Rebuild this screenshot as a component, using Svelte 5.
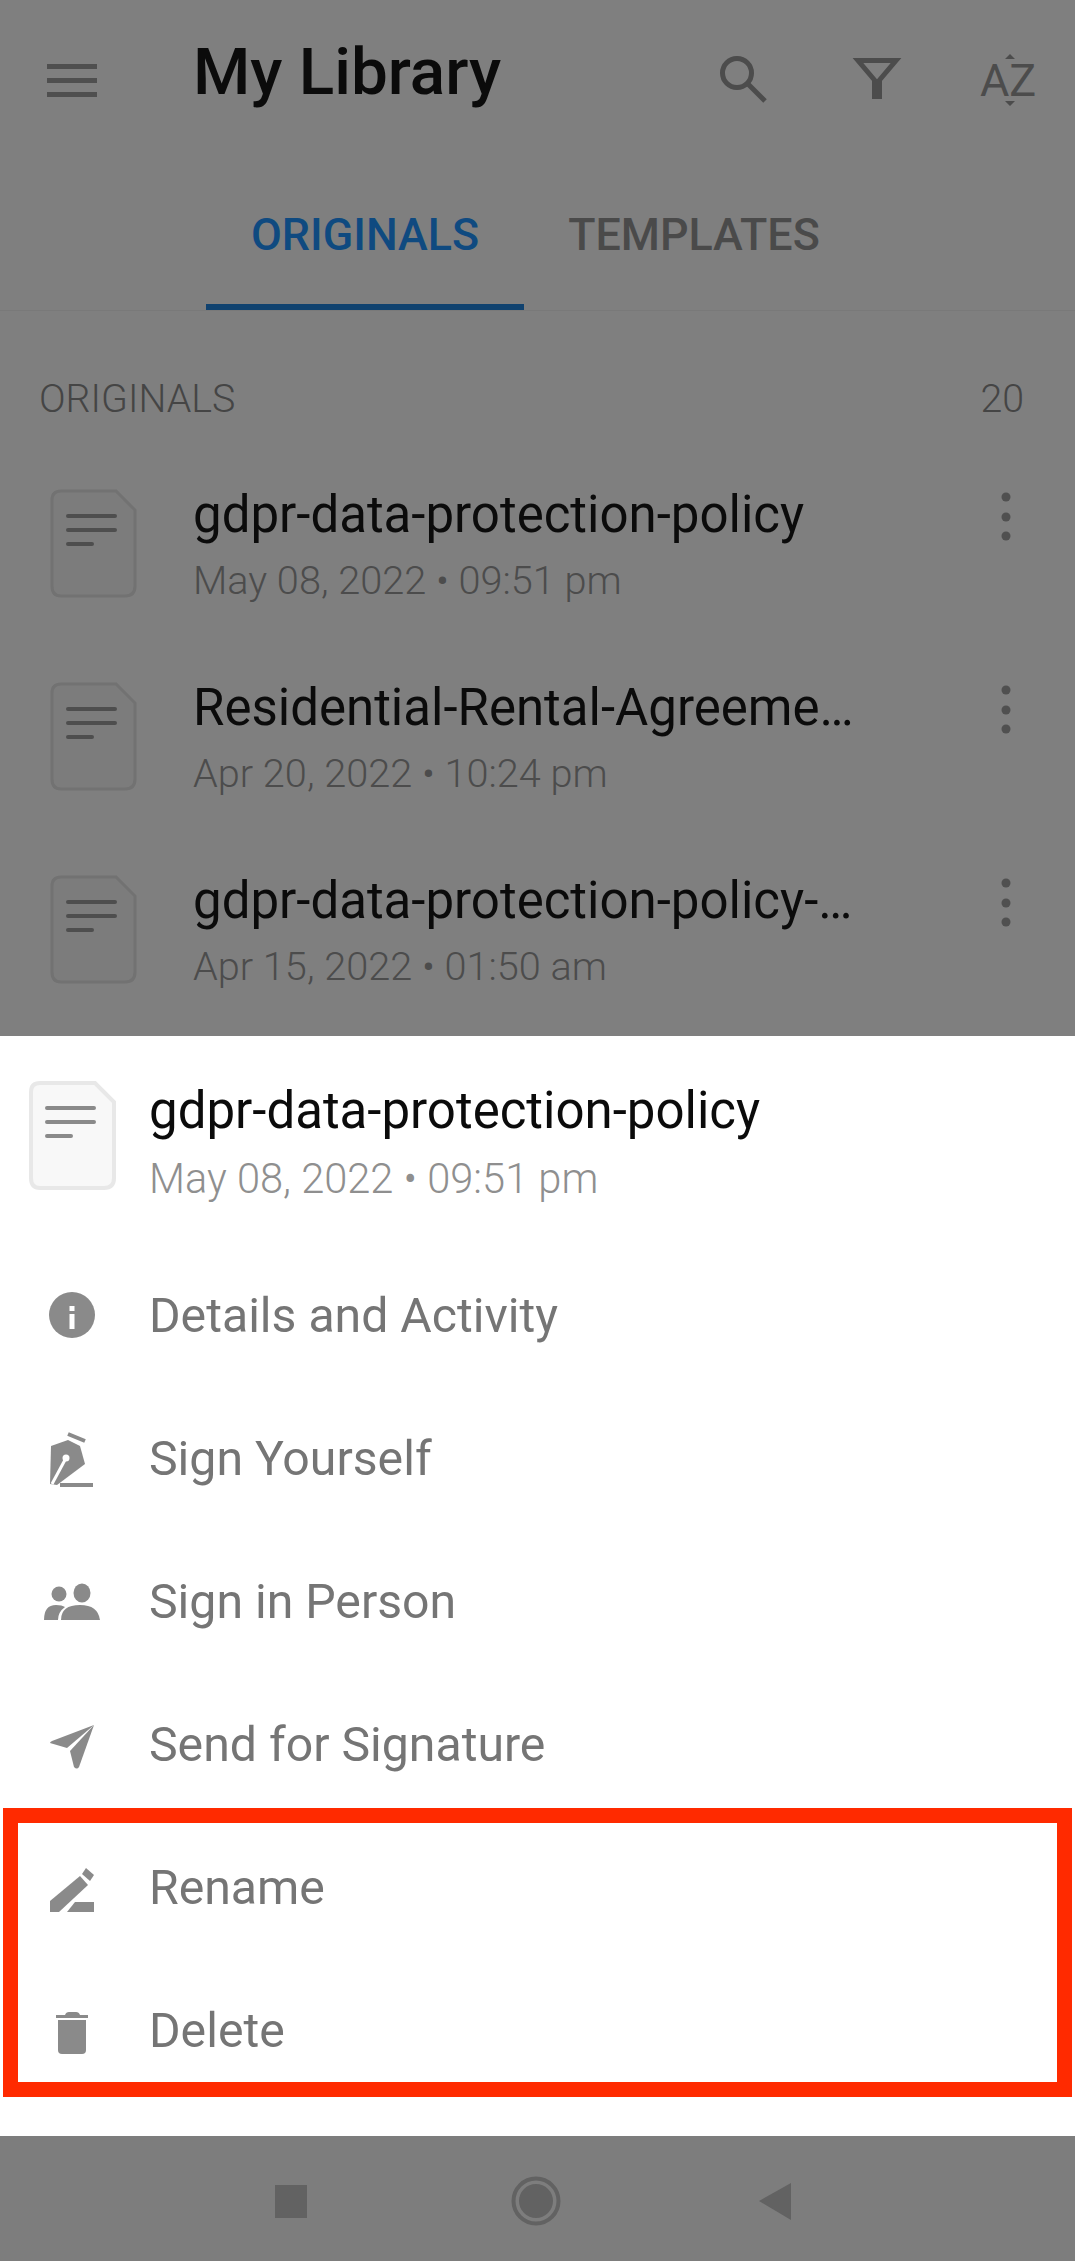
<script lang="ts">
  // 문서 목록과 시트 메뉴
  const docs = [
    { name: 'gdpr-data-protection-policy', date: 'May 08, 2022 • 09:51 pm' },
    { name: 'Residential-Rental-Agreeme…', date: 'Apr 20, 2022 • 10:24 pm' },
    { name: 'gdpr-data-protection-policy-…', date: 'Apr 15, 2022 • 01:50 am' }
  ];
  const menu = [
    { id: 'info', label: 'Details and Activity' },
    { id: 'pen', label: 'Sign Yourself' },
    { id: 'people', label: 'Sign in Person' },
    { id: 'send', label: 'Send for Signature' },
    { id: 'edit', label: 'Rename' },
    { id: 'trash', label: 'Delete' }
  ];
</script>

{#snippet docIcon(kind)}
  <svg class="doc {kind}" width="87" height="109" viewBox="0 0 87 109">
    <path class="sheet-shape" d="M11 2 H66 L85 21 V97 Q85 107 75 107 H11 Q2 107 2 97 V11 Q2 2 11 2 Z" />
    <path class="doc-lines" d="M18 27 H65 M18 41 H65 M18 55 H42" />
  </svg>
{/snippet}

<div class="page">
  <div class="behind">
    <header>
      <div class="topbar">
        <svg class="burger" width="50" height="33" viewBox="0 0 50 33">
          <rect width="50" height="5" />
          <rect y="14" width="50" height="5" />
          <rect y="28" width="50" height="5" />
        </svg>
        <h1>My Library</h1>
        <div class="actions">
          <svg width="60" height="60" viewBox="0 0 60 60" class="line">
            <circle cx="22" cy="23" r="14.5" />
            <path d="M33 34 L50 51" />
          </svg>
          <svg width="60" height="60" viewBox="0 0 60 60" class="line">
            <path d="M11 10.500 H49 L30 33 Z" />
            <path d="M30 30 V49" stroke-width="10" />
          </svg>
          <svg width="60" height="60" viewBox="0 0 60 60" class="az">
            <text x="1" y="46">AZ</text>
            <path d="M31 4 L36 9 H26 Z M31 56 L36 51 H26 Z" />
          </svg>
        </div>
      </div>
      <nav class="tabs">
        <span class="tab active">ORIGINALS</span>
        <span class="tab">TEMPLATES</span>
      </nav>
    </header>

    <div class="section">
      <span>ORIGINALS</span>
      <span>20</span>
    </div>

    {#each docs as d}
      <div class="row">
        {@render docIcon('dim')}
        <div class="meta">
          <div class="name">{d.name}</div>
          <div class="date">{d.date}</div>
        </div>
        <svg class="more" width="10" height="50" viewBox="0 0 10 50">
          <circle cx="5" cy="5" r="4.500" />
          <circle cx="5" cy="25" r="4.500" />
          <circle cx="5" cy="44" r="4.500" />
        </svg>
      </div>
    {/each}
  </div>

  <section class="bottom">
    <div class="head">
      {@render docIcon('light')}
      <div class="meta">
        <div class="name">gdpr-data-protection-policy</div>
        <div class="date">May 08, 2022 • 09:51 pm</div>
      </div>
    </div>
    {#each menu as m}
      <div class="item">
        <svg class="glyph" width="60" height="60" viewBox="0 0 60 60">
          {#if m.id === 'info'}
            <circle cx="30" cy="30" r="23" />
            <rect x="27.500" y="21" width="5" height="5" fill="#fff" />
            <rect x="27.500" y="29" width="5" height="15" fill="#fff" />
          {:else if m.id === 'pen'}
            <path d="M9 18 L26 12 L38 18 L43 36 L15 57 L8 56 Z" />
            <path d="M24 30 L10 56" stroke="#fff" stroke-width="3" />
            <circle cx="24" cy="30" r="3.500" fill="#fff" />
            <path d="M26 6 L43 13" stroke="#8a8a8a" stroke-width="4" />
            <path d="M18 57 H51" stroke="#8a8a8a" stroke-width="4" />
          {:else if m.id === 'people'}
            <circle cx="17" cy="23" r="7.500" />
            <ellipse cx="40" cy="22" rx="8.500" ry="9.500" />
            <path d="M2 49 Q2 34 14 34 Q20 34 23 36 Q16 41 16 49 Z" />
            <path d="M19 49 Q19 34 38 34 Q56 34 58 49 Z" />
          {:else if m.id === 'send'}
            <path d="M8 29 Q8 28 10 27 L52 11 L25 34 Z" />
            <path d="M52 11 L37 53 Q35 56 32 53 L28 37 Z" />
          {:else if m.id === 'edit'}
            <path d="M8 44 L38 19 L46 28 L17 55 H8 Z" />
            <path d="M40 17 L44 11 L52 18 L48 24 Z" />
            <path d="M33 45 H52 V55 H25 Z" />
          {:else}
            <path d="M14 15 H23 Q24 12 27 12 H34 Q37 12 38 15 H46 V18 H14 Z" />
            <path d="M16 20 H44 V50 Q44 54 40 54 H20 Q16 54 16 50 Z" />
          {/if}
        </svg>
        <span>{m.label}</span>
      </div>
    {/each}
  </section>

  <div class="softkeys">
    <svg width="32" height="33" viewBox="0 0 32 33"><rect width="32" height="33" /></svg>
    <svg class="home" width="50" height="50" viewBox="0 0 50 50">
      <circle cx="25" cy="25" r="22.500" fill="none" stroke="#626262" stroke-width="4" />
      <circle cx="25" cy="25" r="17" />
    </svg>
    <svg width="32" height="37" viewBox="0 0 32 37"><path d="M32 0 V37 L0 18 Z" /></svg>
  </div>

  <div class="callout"></div>
</div>

<style>
  :global(body) { margin: 0; background: #7f7f7f; }
  .page { position: relative; width: 1075px; height: 2261px; overflow: hidden; display: flex; flex-direction: column; font-family: Roboto, "Liberation Sans", sans-serif; }

  .behind { flex: none; height: 1036px; overflow: hidden; background: #7f7f7f; }
  header { height: 311px; box-sizing: border-box; border-bottom: 1px solid #797979; }
  .topbar { height: 160px; box-sizing: border-box; display: flex; align-items: center; padding: 0 36px 0 47px; }
  .burger { fill: #4f4f4f; flex: none; }
  h1 { margin: 0 0 16px 96px; font-size: 65.6px; line-height: 70px; font-weight: 500; color: #0b0b0b; }
  .actions { margin-left: auto; display: flex; gap: 72px; }
  .line { fill: none; stroke: #4c4c4c; stroke-width: 5; }
  .az text { font-family: Roboto, sans-serif; font-size: 45px; fill: #4c4c4c; }
  .az path { fill: #4c4c4c; }

  .tabs { display: flex; height: 150px; padding-left: 206px; }
  .tab { padding: 0 44px; box-sizing: border-box; height: 150px; line-height: 150px; font-size: 44.8px; font-weight: 500; color: #4a4a4a; }
  .tab.active { padding: 0 45px; color: #0f4a80; border-bottom: 6px solid #10426f; }

  .section { height: 136px; box-sizing: border-box; padding: 65px 51px 0 39px; display: flex; justify-content: space-between; font-size: 39.3px; line-height: 46px; font-weight: 300; color: #454545; }

  .row { height: 193px; display: flex; align-items: center; padding: 0 64px 0 50px; }
  .doc { flex: none; }
  .dim .sheet-shape { fill: #7c7c7c; stroke: #727272; stroke-width: 3; }
  .doc-lines { fill: none; stroke: #4e4e4e; stroke-width: 4; stroke-linecap: round; }
  .light .sheet-shape { fill: #f8f8f8; stroke: #e8e8e8; stroke-width: 4; }
  .light .doc-lines { stroke: #8a8a8a; }
  .meta { flex: 1; min-width: 0; margin-left: 56px; padding-top: 3px; }
  .name { font-size: 51px; line-height: 58px; color: #0b0b0b; white-space: nowrap; }
  .date { margin-top: 14px; font-size: 39.7px; line-height: 46px; font-weight: 300; color: #4c4c4c; white-space: nowrap; }
  .more { flex: none; fill: #505050; margin-bottom: 54px; }

  .bottom { flex: none; height: 1100px; background: #fff; }
  .head { height: 207px; box-sizing: border-box; display: flex; align-items: flex-start; padding: 45px 0 0 29px; }
  .head .meta { margin-left: 33px; padding-top: 1px; }
  .head .date { margin-top: 16px; font-size: 41.6px; color: #8f8f8f; }
  .item { height: 143px; display: flex; align-items: center; padding-left: 42px; font-size: 48.2px; color: #757575; }
  .item span { margin: 1px 0 0 47px; }
  .glyph { flex: none; fill: #8a8a8a; }

  .softkeys { flex: 1; background: #7d7d7d; display: flex; align-items: center; padding: 5px 0 0 275px; fill: #626262; }
  .home { margin: 0 198px 0 204px; }

  .callout { position: absolute; left: 3px; top: 1808px; width: 1069px; height: 289px; box-sizing: border-box; border: 15px solid #ff2a00; }
</style>
